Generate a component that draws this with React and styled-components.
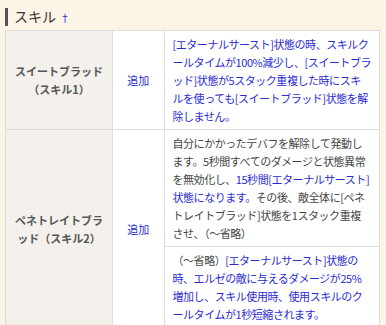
import styled, { createGlobalStyle } from 'styled-components';

const GlobalStyle = createGlobalStyle`
  html, body {
    margin: 0;
    padding: 0;
    background: #fcf4e4;
  }
  body {
    font-family: 'Noto Sans CJK JP', 'Noto Sans', sans-serif;
    color: #333;
  }
`;

const Page = styled.div`
  padding: 8px 6px 0 5px;
`;

const Heading = styled.h3`
  margin: 0 0 4px;
  padding-left: 6px;
  border-left: 3px solid #555;
  font-size: 14px;
  font-weight: normal;
  line-height: 16px;
  color: #333;
  display: flex;
  align-items: baseline;
  gap: 4px;
  a {
    font-size: 10px;
    color: #2a2ad4;
    text-decoration: none;
  }
`;

const Table = styled.table`
  width: 100%;
  border-collapse: collapse;
  background: #fff;
  font-size: 11px;
  line-height: 18px;
  td,
  th {
    border: 1px solid #ddd;
    padding: 4px 8px;
    vertical-align: middle;
  }
`;

const NameCell = styled.th`
  width: 90px;
  background: #f4f1ec;
  color: #555;
  font-weight: bold;
  text-align: center;
  white-space: nowrap;
`;

const TypeCell = styled.td`
  width: 35px;
  text-align: center;
  color: #2a2ad4;
`;

const DescCell = styled.td`
  text-align: left;
  white-space: nowrap;
  letter-spacing: -0.45px;
  color: ${(p) => (p.$link ? '#2a2ad4' : '#444')};
`;

const Link = styled.span`
  color: #2a2ad4;
`;

export default function App() {
  return (
    <>
      <GlobalStyle />
      <Page>
        <Heading>
          スキル<a href='#top'>†</a>
        </Heading>
        <Table>
          <tbody>
            <tr>
              <NameCell>
                スイートブラッド
                <br />
                （スキル1）
              </NameCell>
              <TypeCell>追加</TypeCell>
              <DescCell $link>
                [エターナルサースト]状態の時、スキルク
                <br />
                ールタイムが100%減少し、[スイートブラ
                <br />
                ッド]状態が5スタック重複した時にスキ
                <br />
                ルを使っても[スイートブラッド]状態を解
                <br />
                除しません。
              </DescCell>
            </tr>
            <tr>
              <NameCell rowSpan={2}>
                ペネトレイトブラ
                <br />
                ッド（スキル2）
              </NameCell>
              <TypeCell rowSpan={2}>追加</TypeCell>
              <DescCell>
                自分にかかったデバフを解除して発動し
                <br />
                ます。5秒間すべてのダメージと状態異常
                <br />
                を無効化し、
                <Link>
                  15秒間[エターナルサースト]
                  <br />
                  状態になります。
                </Link>
                その後、敵全体に[ペネ
                <br />
                トレイトブラッド]状態を1スタック重複
                <br />
                させ、（〜省略）
              </DescCell>
            </tr>
            <tr>
              <DescCell>
                （〜省略）
                <Link>
                  [エターナルサースト]状態の
                  <br />
                  時、エルゼの敵に与えるダメージが25%
                  <br />
                  増加し、スキル使用時、使用スキルのク
                  <br />
                  ールタイムが1秒短縮されます。
                </Link>
              </DescCell>
            </tr>
          </tbody>
        </Table>
      </Page>
    </>
  );
}
